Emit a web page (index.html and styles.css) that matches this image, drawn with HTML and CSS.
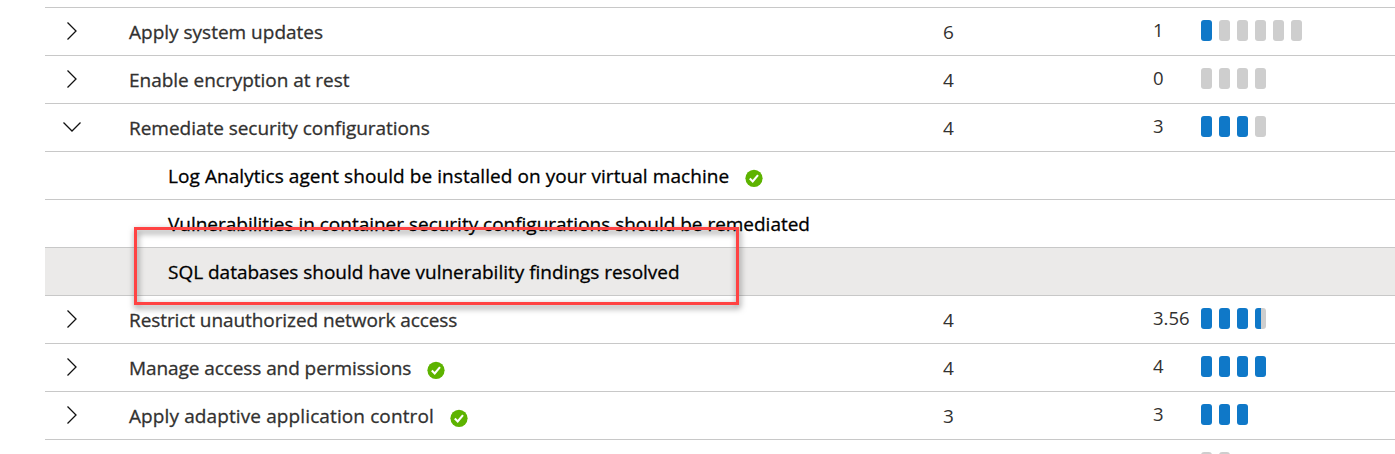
FILE: index.html
```
<!DOCTYPE html>
<html lang="en">
<head>
<meta charset="utf-8">
<title>Security controls</title>
<link rel="stylesheet" href="styles.css">
</head>
<body>
<svg class="defs" width="0" height="0" aria-hidden="true">
  <symbol id="right" viewBox="0 0 20 20"><path d="M5.5 1.5 L14 10 L5.5 18.500" fill="none" stroke="#111" stroke-width="1.3"/></symbol>
  <symbol id="down" viewBox="0 0 20 20"><path d="M1.500 5.500 L10 14 L18.500 5.500" fill="none" stroke="#111" stroke-width="1.3"/></symbol>
  <symbol id="check" viewBox="0 0 18 18"><circle cx="9" cy="9.300" r="8.600" fill="#5db300"/><path d="M4.800 9.500 L7.700 12.400 L13 6.100" fill="none" stroke="#fff" stroke-width="2.100"/></symbol>
</svg>
<main class="controls">
  <div class="row"><svg class="chevron"><use href="#right"/></svg><div class="name"><span class="t1">Apply system updates</span></div><div class="max">6</div><div class="score">1</div><div class="bars"><i class="on"></i><i></i><i></i><i></i><i></i><i></i></div></div>
  <div class="row"><svg class="chevron"><use href="#right"/></svg><div class="name"><span class="t2">Enable encryption at rest</span></div><div class="max">4</div><div class="score">0</div><div class="bars"><i></i><i></i><i></i><i></i></div></div>
  <div class="row"><svg class="chevron"><use href="#down"/></svg><div class="name"><span class="t3">Remediate security configurations</span></div><div class="max">4</div><div class="score">3</div><div class="bars"><i class="on"></i><i class="on"></i><i class="on"></i><i></i></div></div>
  <div class="row child"><div class="name"><span class="t4">Log Analytics agent should be installed on your virtual machine</span><svg class="check"><use href="#check"/></svg></div></div>
  <div class="row child"><div class="name"><span class="t5">Vulnerabilities in container security configurations should be remediated</span></div></div>
  <div class="row child selected"><div class="name"><span class="t6">SQL databases should have vulnerability findings resolved</span></div><div class="callout"></div></div>
  <div class="row"><svg class="chevron"><use href="#right"/></svg><div class="name"><span class="t7">Restrict unauthorized network access</span></div><div class="max">4</div><div class="score">3.56</div><div class="bars"><i class="on"></i><i class="on"></i><i class="on"></i><i class="part"></i></div></div>
  <div class="row"><svg class="chevron"><use href="#right"/></svg><div class="name"><span class="t8">Manage access and permissions</span><svg class="check"><use href="#check"/></svg></div><div class="max">4</div><div class="score">4</div><div class="bars"><i class="on"></i><i class="on"></i><i class="on"></i><i class="on"></i></div></div>
  <div class="row"><svg class="chevron"><use href="#right"/></svg><div class="name"><span class="t9">Apply adaptive application control</span><svg class="check"><use href="#check"/></svg></div><div class="max">3</div><div class="score">3</div><div class="bars"><i class="on"></i><i class="on"></i><i class="on"></i></div></div>
  <div class="row last"><span class="chevron"></span><div class="name"></div><div class="max"></div><div class="score"></div><div class="bars"><i></i><i></i></div></div>
</main>
</body>
</html>
```
FILE: styles.css
```
* { box-sizing: border-box; }
body {
  margin: 0;
  height: 454px;
  overflow: hidden;
  background: #fff;
  color: #323130;
  font: 500 19px/26px "Open Sans", "Noto Sans", sans-serif;
}
.defs { display: block; }
.controls { height: 454px; overflow: hidden; padding: 7px 0 0 45px; }
.row {
  display: grid;
  grid-template-columns: 84px 814px 210px 48px 1fr;
  height: 48px;
  border-top: 1px solid #c8c8c8;
  white-space: nowrap;
}
.last { height: 15px; overflow: hidden; }
.chevron { width: 20px; height: 20px; margin: 13px 0 0 17px; }
.last .chevron { height: 0; margin: 0; }
.name { display: flex; padding-top: 11px; -webkit-text-stroke: .3px currentColor; }
.max { padding-top: 11px; font-weight: 400; }
.score { padding-top: 9px; font-weight: 400; font-size: 18.500px; }
.last .name, .last .max, .last .score { padding: 0; }
.bars { display: flex; gap: 7px; padding-top: 12px; }
.bars i { width: 11px; height: 21px; border-radius: 3px; background: #cecece; }
.bars .on { background: #0f78c8; }
.bars .part { background: linear-gradient(90deg, #0f78c8 6px, #cecece 6px); }
.check { width: 18px; height: 18px; margin: 6px 0 0 16px; }
.t2, .t3 { letter-spacing: -.03px; }
.t4 { letter-spacing: .07px; }
.t5, .t6 { letter-spacing: -.015px; }
.t7, .t8 { letter-spacing: -.08px; }
.t9 { letter-spacing: .11px; }
.child { grid-template-columns: 1fr; padding-left: 123px; color: #000; }
.selected { position: relative; background: #ebeae9; }
.callout {
  position: absolute;
  left: 89px;
  top: -21px;
  width: 605px;
  height: 78px;
  border: 3px solid #ff4343;
  filter: drop-shadow(1px 3px 3px rgba(0, 0, 0, .5));
}
```
